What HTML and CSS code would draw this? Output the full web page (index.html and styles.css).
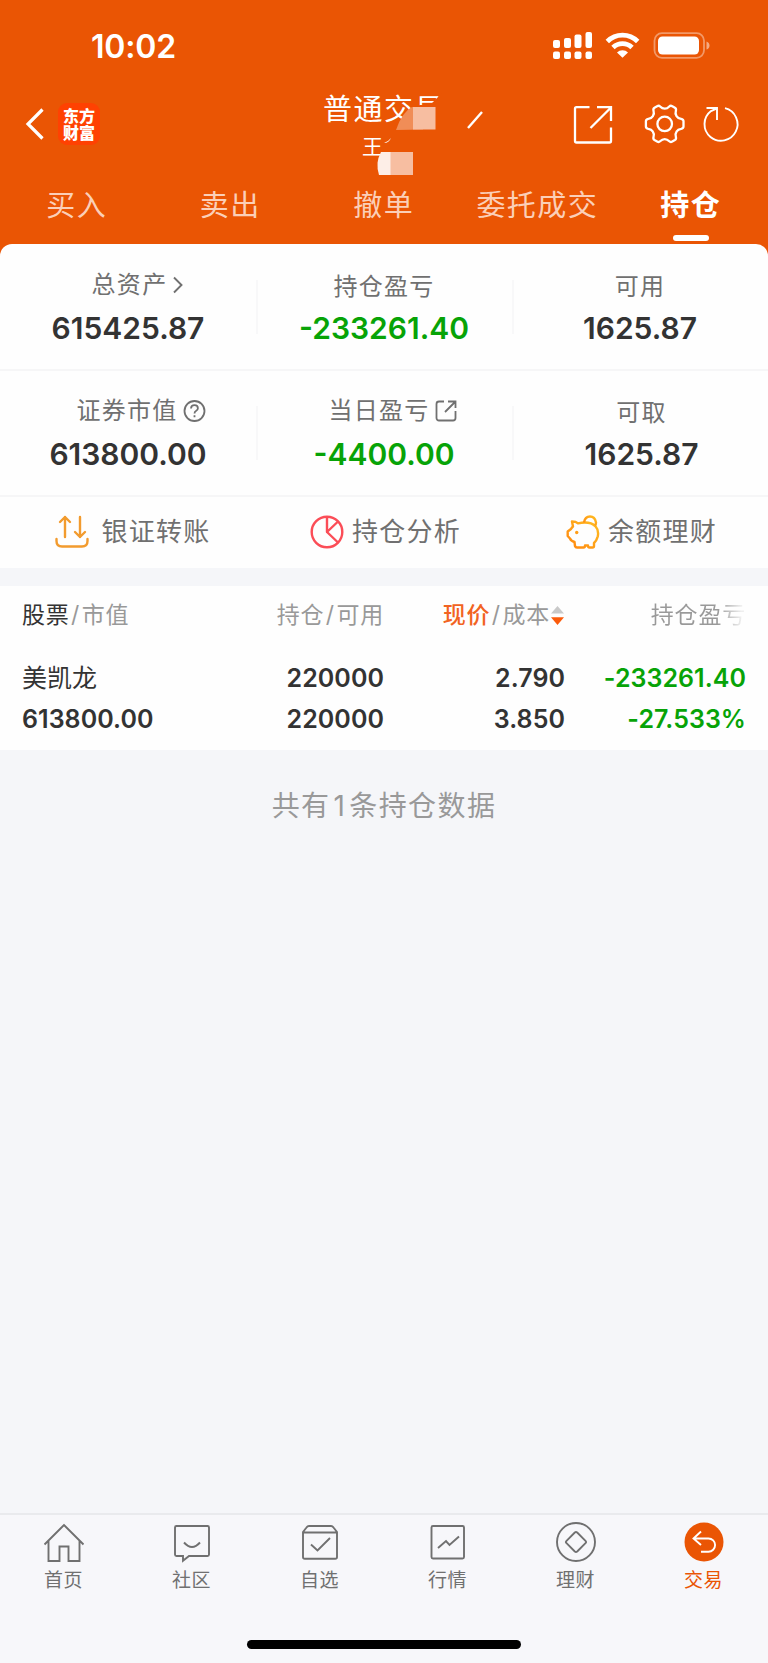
FILE: index.html
```html
<!DOCTYPE html>
<html lang="zh-CN">
<head>
<meta charset="utf-8">
<title>持仓</title>
<link rel="stylesheet" href="styles.css">
</head>
<body>
<div class="app">
  <header class="header">
    <div class="status">
      <span class="time">10:02</span>
      <svg class="status-icons" width="160" height="32" viewBox="0 0 160 32" fill="#fff">
        <g>
          <rect x="1" y="10" width="7" height="8" rx="2"/><rect x="12" y="8" width="7" height="10" rx="2"/><rect x="22.5" y="4.500" width="7" height="13.500" rx="2"/><rect x="33.500" y="2" width="6.500" height="16" rx="2"/>
          <rect x="1" y="21.500" width="7" height="7.500" rx="2"/><rect x="12" y="21.500" width="7" height="7.500" rx="2"/><rect x="22.5" y="21.500" width="7" height="7.500" rx="2"/><rect x="33.500" y="21.500" width="6.500" height="7.500" rx="2"/>
        </g>
        <g fill="none" stroke="#fff" stroke-width="4.800">
          <path d="M55.300 11.500a21.500 21.500 0 0 1 30.400 0"/>
          <path d="M61 17.500a13.500 13.500 0 0 1 19 0"/>
        </g>
        <path d="M65 22.500a7.700 7.700 0 0 1 11 0l-5.500 5.300z"/>
        <rect x="102.500" y="3.200" width="49.500" height="24.600" rx="7.500" fill="none" stroke="#fff" stroke-opacity=".4" stroke-width="1.800"/>
        <rect x="106" y="6.500" width="41" height="18" rx="4.500"/>
        <path d="M154.500 11.500q3 1 3 4t-3 4z" fill-opacity=".5"/>
      </svg>
    </div>
    <div class="titlebar">
      <div class="brand">
        <svg width="20" height="34" viewBox="0 0 20 34"><path d="M18.500 2.500 4 17l14.500 14.500" fill="none" stroke="#fff" stroke-width="3.200"/></svg>
        <div class="logo"><span>东方</span><span>财富</span></div>
      </div>
      <div class="account">
        <div class="account-type">普通交易</div>
        <div class="account-name">王</div>
        <svg class="redact" width="200" height="100" viewBox="0 0 200 100">
          <path d="M87 49q6-16 15-21l8-3V25h10l12-12h12v60H87z" fill="#ea5504"/>
          <path d="M86 50q6-18 16-23h11v22.500z" fill="#f08d57"/>
          <rect x="103" y="27" width="22.500" height="22.500" fill="#f7bea1"/>
          <path d="M74 63q4-1 7-5-2 5-7 5z" fill="#fff"/>
          <path d="M69 95q-4-12 2-23h10v23z" fill="#fdeee7"/>
          <rect x="80.500" y="72" width="22.500" height="23" fill="#f7bea1"/>
          <path d="m158 48 14-16" stroke="#fff" stroke-width="2.400"/>
        </svg>
      </div>
      <svg class="actions" width="180" height="44" viewBox="0 0 180 44" fill="none" stroke="#fff" stroke-width="2.300">
        <path d="M25.500 5.200h-13A1.500 1.500 0 0 0 11 6.700V39a1.500 1.500 0 0 0 1.500 1.500h33A1.500 1.500 0 0 0 47 39V25.500M33 5.200h14V19M46.500 6l-20 20" />
        <g transform="translate(100.700 21.900)">
          <path d="M0-15.200Q2.500-15.200 4.600-17.400 5.800-18.700 7.600-17.700L10.200-16.200Q11.800-15.200 11.200-13.200 10.200-10 11.800-7.800 13.300-5.400 16.400-5 18.800-4.600 18.800-2.600V2.600Q18.800 4.600 16.400 5 13.300 5.400 11.800 7.800 10.200 10 11.200 13.200 11.800 15.200 10.200 16.200L7.600 17.700Q5.800 18.700 4.600 17.400 2.500 15.200 0 15.200-2.500 15.200-4.600 17.400-5.800 18.700-7.600 17.700L-10.200 16.200Q-11.800 15.200-11.200 13.200-10.200 10-11.800 7.800-13.300 5.400-16.400 5-18.800 4.600-18.800 2.600V-2.600Q-18.800-4.600-16.400-5-13.300-5.400-11.800-7.800-10.200-10-11.200-13.200-11.800-15.200-10.200-16.200L-7.600-17.700Q-5.800-18.700-4.600-17.400-2.500-15.200 0-15.200z"/>
          <circle r="7.300"/>
        </g>
        <path d="M161 6.200a16.500 16.500 0 1 1-14 2.900l5.500-2.500M142.500 6h10.500v12" stroke-width="1.900"/>
      </svg>
    </div>
    <nav class="tabs">
      <span>买入</span><span>卖出</span><span>撤单</span><span>委托成交</span><span class="on">持仓</span>
    </nav>
  </header>

  <section class="summary">
    <div class="row">
      <div class="cell"><div class="label up assets">总资产<svg width="12" height="20" viewBox="0 0 12 20"><path d="m2 2.500 7.500 7.500L2 17.500" fill="none" stroke="#707070" stroke-width="1.900"/></svg></div><div class="num">615425.87</div></div>
      <div class="cell"><div class="label">持仓盈亏</div><div class="num green">-233261.40</div></div>
      <div class="cell"><div class="label">可用</div><div class="num">1625.87</div></div>
    </div>
    <div class="row">
      <div class="cell"><div class="label up market">证券市值<svg width="28" height="24" viewBox="0 0 28 24" fill="none" stroke="#707070" stroke-width="1.800"><circle cx="16.500" cy="12" r="10"/><path d="M13 9.500q.2-3.300 3.500-3.300 3.400 0 3.400 3 0 1.500-1.700 2.600-1.700 1-1.700 2.700M16.500 16.200v2"/></svg></div><div class="num">613800.00</div></div>
      <div class="cell"><div class="label up daily">当日盈亏<svg width="28" height="24" viewBox="0 0 28 24" fill="none" stroke="#707070" stroke-width="1.800"><path d="M14 2.500H9A2.500 2.500 0 0 0 6.500 5v14A2.500 2.500 0 0 0 9 21.500h14a2.500 2.500 0 0 0 2.500-2.500v-7M18 2.500h7.500V9M25 3 15 13"/></svg></div><div class="num green">-4400.00</div></div>
      <div class="cell shift"><div class="label">可取</div><div class="num">1625.87</div></div>
    </div>
    <div class="tools">
      <div class="tool transfer"><svg width="34" height="34" viewBox="0 0 34 34" fill="none" stroke="#f29b2e" stroke-width="2.400" stroke-linecap="round" stroke-linejoin="round"><path d="M10 22V2M5 7l5-5 5 5M25 2v20M20 17l5 5 5-5M1.500 24v2q0 5.500 5.500 5.500h20q5.500 0 5.500-5.500v-2"/></svg><span>银证转账</span></div>
      <div class="tool"><svg width="34" height="34" viewBox="0 0 34 34" fill="none" stroke="#fb4d57" stroke-width="2.400" stroke-linejoin="round"><circle cx="17" cy="17" r="15.300"/><path d="M17 2v15l10.500-10M17 17l11 10.500"/></svg><span>持仓分析</span></div>
      <div class="tool"><svg width="34" height="34" viewBox="0 0 34 34" fill="none" stroke="url(#pig)" stroke-width="2.400" stroke-linejoin="round"><defs><linearGradient id="pig" x1="0" y1="1" x2="1" y2="0"><stop offset="0" stop-color="#ff860f"/><stop offset="1" stop-color="#ffbd22"/></linearGradient></defs><path d="M6 6.500q4 0 6 1.800 12-2.500 17.500 3 3.500 4 2.300 10-1.300 4.500-3.800 6.700v3q0 1.500-1.500 1.500h-3q-1.500 0-1.500-2h-3q0 2-1.500 2H11q-1.500 0-2-1.500l-.5-4Q5 26 4 23.500L1.700 21v-4.500L5 14q.8-1.500 2-2.500z"/><path d="M18 7.500q1-6 6-6t6 6q0 2-1 3"/><circle cx="10.700" cy="17.500" r="1.700" fill="#ff9e18" stroke="none"/></svg><span>余额理财</span></div>
    </div>
  </section>

  <section class="holdings">
    <div class="cols head">
      <div><b>股票</b><i>/</i>市值</div>
      <div>持仓<i>/</i>可用</div>
      <div><b class="hot">现价</b><i>/</i>成本<svg width="15" height="20" viewBox="0 0 15 20"><path d="M7.500 0 14 7.500H1z" fill="#c9c9c9"/><path d="M7.500 19 14 11.200H1z" fill="#fb5b0b"/></svg></div>
      <div><span class="fade">持仓盈亏</span></div>
    </div>
    <div class="cols first"><div class="stock">美凯龙</div><div>220000</div><div>2.790</div><div class="green">-233261.40</div></div>
    <div class="cols second"><div>613800.00</div><div>220000</div><div>3.850</div><div class="green">-27.533%</div></div>
  </section>
  <p class="count">共有<span>1</span>条持仓数据</p>

  <footer class="footer">
    <nav class="menu">
      <a><svg viewBox="0 0 44 44"><path d="M2.500 24.500 22 5l19.500 19.500M6.500 21v20h11V26.500h9V41h11V21"/></svg><span>首页</span></a>
      <a><svg viewBox="0 0 44 44"><path d="M6.500 6h31q1.500 0 1.500 1.500v27q0 1.500-1.500 1.500H19l-6 4.800V36H6.500Q5 36 5 34.500v-27Q5 6 6.500 6zM14 22.500q8 9 16 0"/></svg><span>社区</span></a>
      <a><svg viewBox="0 0 44 44"><path d="M5 12.500h34M5 12v25q0 1.800 1.800 1.800h30.400q1.800 0 1.800-1.800V12l-3.500-4.500Q34.500 6 33 6H11Q9.500 6 8.500 7.500zM13 24.500l6.500 6L32 18"/></svg><span>自选</span></a>
      <a><svg viewBox="0 0 44 44"><rect x="5.500" y="6" width="32.500" height="32.500" rx="1.500"/><path d="m12 28 8-7 3.500 4L33 16.500"/></svg><span>行情</span></a>
      <a><svg viewBox="0 0 44 44"><circle cx="22" cy="22" r="19"/><path d="M20.800 12.500q1.200-1 2.400 0l8.300 8.300q1.200 1.200 0 2.400l-8.300 8.300q-1.200 1-2.400 0l-8.300-8.300q-1.200-1.200 0-2.400z"/></svg><span>理财</span></a>
      <a class="on"><svg viewBox="0 0 44 44"><circle cx="22" cy="22" r="19.500" fill="#ea5504" stroke="none"/><path d="m19 11.500-7.500 7L19 25M12 18.500h14.500a6.600 6.600 0 0 1 0 13.200H19" stroke="#fff"/></svg><span>交易</span></a>
    </nav>
    <div class="home-indicator"></div>
  </footer>
</div>
</body>
</html>
```
FILE: styles.css
```css
* { box-sizing: border-box; }
body { margin: 0; background: #f5f6f9; }
.app {
  width: 768px; height: 1663px; display: flex; flex-direction: column;
  font-family: Inter, "Noto Sans CJK SC", sans-serif; color: #333; overflow: hidden;
}
.header { height: 257px; flex: none; background: #ea5504; color: #fff; }
.status { height: 92px; padding: 27px 56px 0 91px; display: flex; justify-content: space-between; }
.time { font-size: 32px; font-weight: 600; line-height: 40px; letter-spacing: -.2px; }
.status-icons { margin-top: 3px; }
.titlebar { height: 88px; display: flex; align-items: flex-start; }
.brand { width: 310px; flex: none; padding: 11px 0 0 24px; display: flex; gap: 14px; align-items: center; }
.logo {
  width: 42px; height: 42px; border-radius: 9px; background: #ff4102; display: flex; flex-direction: column;
  justify-content: center; font: 900 16px/17px "Noto Sans CJK SC", sans-serif; text-align: center;
}
.account { position: relative; width: 200px; height: 88px; }
.account-type { padding-left: 13px; font-size: 29px; line-height: 36px; letter-spacing: 1.5px; white-space: nowrap; }
.account-name { padding-left: 52px; font-size: 21px; line-height: 38px; }
.redact { position: absolute; left: 0; top: -12px; }
.actions { margin: 10px 24px 0 auto; }
.tabs { display: grid; grid-template-columns: repeat(5, 153.5px); padding-top: 2px; text-align: center; font-size: 29px; line-height: 48px; letter-spacing: 1.4px; color: #fbcfb8; }
.tabs .on { color: #fff; font-weight: 700; }
.tabs .on::after { content: ""; display: block; width: 36px; height: 6px; margin: 5px auto 0; border-radius: 3px; background: #fff; }

.summary { flex: none; height: 324px; margin-top: -13px; border-radius: 12px 12px 0 0; background: #fefefe; }
.row { height: 125px; display: grid; grid-template-columns: repeat(3, 1fr); }
.row + .row { height: 126px; padding-top: 1px; }
.row + .row, .tools { background: linear-gradient(#f6f6f7, #f6f6f7) 0 0 / 100% 2px no-repeat; }
.cell { padding-top: 25px; text-align: center; background: linear-gradient(#f8f8f9, #f8f8f9) 0 36px / 2px 54px no-repeat; }
.cell:first-child { background: none; }
.shift { padding-left: 3px; }
.label { height: 36px; display: flex; justify-content: center; align-items: center; font-size: 24px; line-height: 36px; letter-spacing: 1.3px; color: #707070; }
.label.up { height: 34px; margin: -1px 0 3px; }
.assets { padding-left: 20px; }
.market { padding-left: 26px; }
.daily { padding-left: 18px; }
.label svg { margin-left: 5px; }
.label svg[width="28"] { margin-left: 0; }
.num { font-size: 30px; font-weight: 600; line-height: 47px; }
.green { color: #07a307; }
.tools { height: 73px; display: grid; grid-template-columns: repeat(3, 1fr); }
.tool { display: flex; align-items: center; justify-content: center; gap: 8px; padding-left: 3px; font-size: 26px; letter-spacing: 1.2px; color: #707070; }
.tool span { padding-bottom: 4px; }
.transfer { gap: 13px; padding-left: 9px; }

.holdings { flex: none; height: 164px; margin-top: 18px; padding: 0 22px; background: #fefefe; }
.cols { display: grid; grid-template-columns: 181px 181px 181px 181px; font-size: 25px; font-weight: 600; line-height: 42px; text-align: right; white-space: nowrap; letter-spacing: .05px; }
.cols > :first-child { text-align: left; }
.cols { height: 41px; }
.head { height: 71px; padding-top: 9px; font-size: 23px; line-height: 40px; font-weight: 400; color: #999; letter-spacing: .8px; }
.head i { font-style: normal; margin: 0 1.5px; }
.head b { font-weight: 400; color: #333; }
.head .hot { color: #f26322; font-weight: 500; }
.head svg { vertical-align: -3px; }
.fade { background: linear-gradient(90deg, #999 70%, #eee 95%); -webkit-background-clip: text; background-clip: text; color: transparent; }
.cols .stock { font-size: 25px; font-weight: 400; line-height: 43px; }
.count { flex: 1; margin: 0; padding-top: 36px; text-align: center; font-size: 28px; line-height: 40px; letter-spacing: 1.4px; color: #999; }
.count span { margin: 0 3px; }

.footer { flex: none; height: 150px; border-top: 2px solid #e9eaed; background: #f7f7fa; }
.menu { height: 125px; display: grid; grid-template-columns: repeat(6, 1fr); padding-top: 5px; }
.menu a { display: flex; flex-direction: column; align-items: center; font-size: 19px; line-height: 30px; letter-spacing: .6px; color: #707070; }
.menu span { padding-right: 1px; }
.menu svg { width: 44px; height: 44px; margin-bottom: 2px; fill: none; stroke: #707070; stroke-width: 1.9; }
.menu .on { color: #ea5504; }
.home-indicator { width: 274px; height: 9px; border-radius: 5px; margin: 0 auto; background: #000; }
```
